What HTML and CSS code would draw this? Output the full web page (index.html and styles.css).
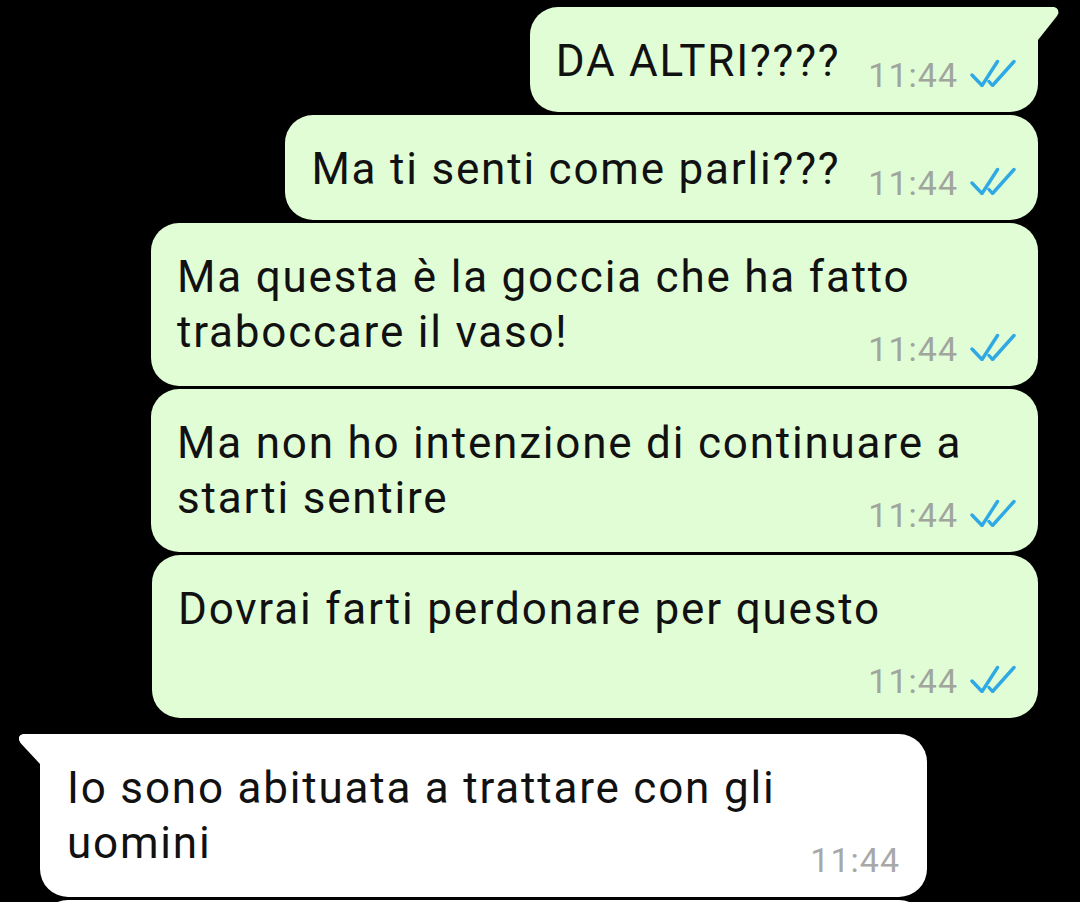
FILE: index.html
```html
<!DOCTYPE html>
<html lang="it">
<head>
<meta charset="utf-8">
<title>Chat</title>
<link rel="stylesheet" href="styles.css">
</head>
<body>
<div class="chat">
  <div class="bubble out tail inline">
    <div class="text">DA ALTRI????</div>
    <div class="meta"><span class="time">11:44</span><svg class="ticks" viewBox="0 0 46 28" width="46" height="28"><path d="M2 16 L12 26.5 L27.5 2.5 M19 22.5 L22.5 26.5 L44 2.5" fill="none" stroke="#2fa9e3" stroke-width="3.4" stroke-linecap="round" stroke-linejoin="round"/></svg></div>
  </div>
  <div class="bubble out inline">
    <div class="text">Ma ti senti come parli???</div>
    <div class="meta"><span class="time">11:44</span><svg class="ticks" viewBox="0 0 46 28" width="46" height="28"><path d="M2 16 L12 26.5 L27.5 2.5 M19 22.5 L22.5 26.5 L44 2.5" fill="none" stroke="#2fa9e3" stroke-width="3.4" stroke-linecap="round" stroke-linejoin="round"/></svg></div>
  </div>
  <div class="bubble out">
    <div class="text">Ma questa è la goccia che ha fatto traboccare il vaso!</div>
    <div class="meta"><span class="time">11:44</span><svg class="ticks" viewBox="0 0 46 28" width="46" height="28"><path d="M2 16 L12 26.5 L27.5 2.5 M19 22.5 L22.5 26.5 L44 2.5" fill="none" stroke="#2fa9e3" stroke-width="3.4" stroke-linecap="round" stroke-linejoin="round"/></svg></div>
  </div>
  <div class="bubble out">
    <div class="text">Ma non ho intenzione di continuare a starti sentire</div>
    <div class="meta"><span class="time">11:44</span><svg class="ticks" viewBox="0 0 46 28" width="46" height="28"><path d="M2 16 L12 26.5 L27.5 2.5 M19 22.5 L22.5 26.5 L44 2.5" fill="none" stroke="#2fa9e3" stroke-width="3.4" stroke-linecap="round" stroke-linejoin="round"/></svg></div>
  </div>
  <div class="bubble out wide">
    <div class="text">Dovrai farti perdonare per questo<br>&nbsp;</div>
    <div class="meta"><span class="time">11:44</span><svg class="ticks" viewBox="0 0 46 28" width="46" height="28"><path d="M2 16 L12 26.5 L27.5 2.5 M19 22.5 L22.5 26.5 L44 2.5" fill="none" stroke="#2fa9e3" stroke-width="3.4" stroke-linecap="round" stroke-linejoin="round"/></svg></div>
  </div>
  <div class="bubble in tail first">
    <div class="text">Io sono abituata a trattare con gli uomini</div>
    <div class="meta"><span class="time">11:44</span></div>
  </div>
  <div class="bubble in next">
    <div class="text">&nbsp;</div>
  </div>
</div>
</body>
</html>
```

FILE: styles.css
```css
html, body {
  margin: 0;
  padding: 0;
  background: #000;
  height: 100%;
  overflow: hidden;
}

body {
  font-family: Roboto, "Noto Sans", "Liberation Sans", sans-serif;
  color: #111;
}

.chat {
  display: flex;
  flex-direction: column;
  gap: 3px;
  padding: 7px 42px 0 40px;
}

.bubble {
  position: relative;
  box-sizing: border-box;
  max-width: 887px;
  padding: 27px 22px 19px 26px;
  border-radius: 28px;
  display: flex;
  flex-direction: column;
}

.bubble.out {
  align-self: flex-end;
  background: #e1fdd5;
}

.bubble.out.wide {
  width: 886px;
}

.bubble.in {
  align-self: flex-start;
  background: #fff;
  padding-left: 27px;
  padding-right: 27px;
}

.bubble.in.first {
  margin-top: 13px;
}

.bubble.in.next {
  width: 887px;
}

.bubble.out.tail {
  border-top-right-radius: 0;
}

.bubble.out.tail::after {
  content: "";
  position: absolute;
  top: 0;
  right: -21px;
  width: 22px;
  height: 33px;
  background: #e1fdd5;
  clip-path: polygon(0 0, 17px 0, 19.5px 1px, 21px 3px, 21.5px 6px, 20px 9px, 1px 33px, 0 33px);
}

.bubble.in.tail {
  border-top-left-radius: 0;
}

.bubble.in.tail::before {
  content: "";
  position: absolute;
  top: 0;
  left: -21px;
  width: 22px;
  height: 30px;
  background: #fff;
  clip-path: polygon(100% 0, 4px 0, 1.5px 1px, 0 3px, 0 6px, 1.5px 9px, 21px 30px, 100% 30px);
}

.text {
  font-size: 44px;
  letter-spacing: 1.8px;
  line-height: 55px;
}

.meta {
  display: flex;
  align-items: center;
  align-self: flex-end;
  gap: 12px;
  height: 36px;
  margin-top: -29px;
}

.time {
  font-size: 34px;
  letter-spacing: 1px;
  line-height: 36px;
  color: #a0a59d;
}

.bubble.in .time {
  color: #a8a8a8;
}

.ticks {
  display: block;
  margin-top: -5px;
}

.bubble.inline {
  flex-direction: row;
  align-items: flex-end;
  gap: 28px;
}

.bubble.inline .text {
  margin-bottom: 4px;
}

.bubble.inline .meta {
  margin-top: 0;
}
```
